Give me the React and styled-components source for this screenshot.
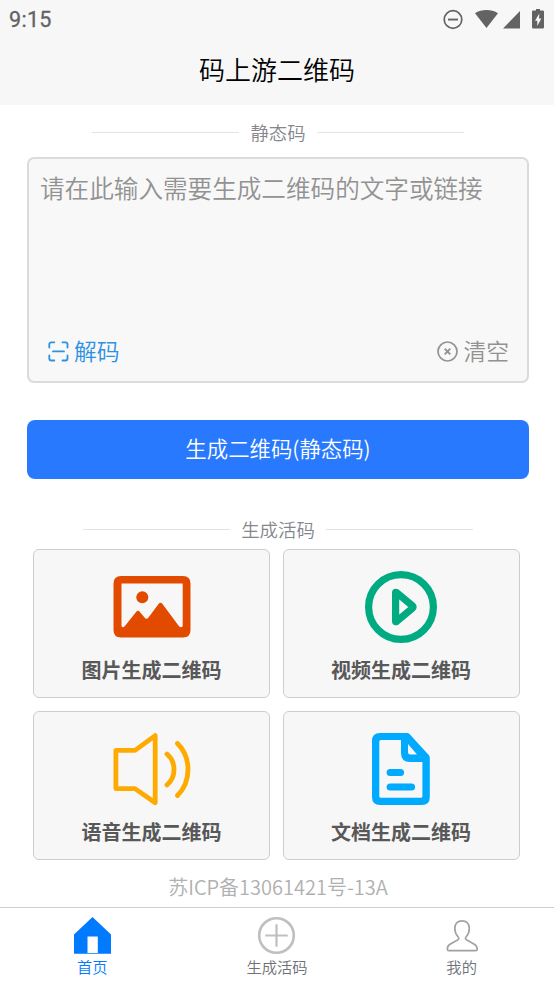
import React from 'react';
import styled, { createGlobalStyle } from 'styled-components';

const GlobalStyle = createGlobalStyle`
  * {
    box-sizing: border-box;
  }

  body {
    margin: 0;
    background-color: #fff;
    font-family: 'Noto Sans CJK SC', sans-serif;
    font-weight: 350;
  }

  svg {
    display: block;
    flex-shrink: 0;
  }
`;

const Page = styled.div`
  display: flex;
  flex-direction: column;
  width: 554px;
  height: 985px;
  background-color: #fff;
  overflow: hidden;
`;

const Header = styled.header`
  height: 105px;
  background-color: #f7f7f7;
`;

const StatusBar = styled.div`
  display: flex;
  align-items: center;
  justify-content: space-between;
  height: 37px;
  padding: 0 8px 0 9px;
  color: #636363;
`;

const Clock = styled.span`
  padding-top: 2px;
  font-family: Roboto, sans-serif;
  font-size: 21.5px;
  font-weight: 400;
  letter-spacing: 0.3px;
  line-height: 36px;
  -webkit-text-stroke: 0.3px #636363;
`;

const Title = styled.h1`
  margin: 0;
  text-align: center;
  font-size: 26px;
  font-weight: 350;
  line-height: 64px;
  color: #000;
`;

const Content = styled.main`
  display: flex;
  flex-direction: column;
  height: 802px;
  padding: 14px 25px 0 27px;
`;

const Divider = styled.div`
  display: flex;
  align-items: center;
  justify-content: center;
  gap: 11px;
  height: 26px;
  font-size: 18.4px;
  line-height: 26px;
  color: #85878c;

  &::before,
  &::after {
    content: '';
    width: 147.5px;
    height: 1px;
    background-color: #e2e3e5;
  }
`;

const InputBox = styled.section`
  display: flex;
  flex-direction: column;
  justify-content: space-between;
  height: 226px;
  margin-top: 12px;
  padding: 11px 18px 13px 11px;
  border: 2px solid #dbdbdb;
  border-radius: 7px;
  background-color: #f8f8f8;
`;

const Placeholder = styled.div`
  font-size: 24.6px;
  line-height: 34px;
  white-space: nowrap;
  color: #929292;
`;

const BoxActions = styled.div`
  display: flex;
  justify-content: space-between;
  padding-left: 8px;
`;

const Action = styled.div`
  display: flex;
  align-items: center;
  gap: 5px;
  font-size: 22.8px;
  line-height: 34px;
  color: ${props => props.color};
`;

const SubmitButton = styled.button`
  height: 59px;
  margin: 37px 0 0;
  padding: 0 0 5px;
  border: 0;
  border-radius: 8px;
  background-color: #2979ff;
  color: #fff;
  font-family: inherit;
  font-size: 21.4px;
  font-weight: 350;
`;

const LiveSection = styled.section`
  margin-top: 37px;
`;

const CardGrid = styled.div`
  display: grid;
  grid-template-columns: 237px 237px;
  grid-auto-rows: 149px;
  gap: 13px 12.5px;
  margin: 7px 0 0 6px;
`;

const Card = styled.div`
  display: flex;
  flex-direction: column;
  align-items: center;
  padding-top: 16px;
  border: 1.5px solid #cdcdcd;
  border-radius: 6px;
  background-color: #f7f7f7;
`;

const CardLabel = styled.div`
  margin-top: 7px;
  font-size: 20px;
  font-weight: 700;
  line-height: 30px;
  color: #585858;
`;

const Record = styled.footer`
  margin-top: 13px;
  text-align: center;
  font-size: 20px;
  line-height: 28px;
  color: #b0b0b0;
`;

const TabBar = styled.nav`
  display: grid;
  grid-template-columns: repeat(3, 1fr);
  height: 78px;
  border-top: 1px solid #cfcfcf;
  background-color: #fff;
`;

const Tab = styled.div`
  display: flex;
  flex-direction: column;
  align-items: center;
  padding-top: 8px;
  font-size: 15.3px;
  line-height: 22px;
  color: ${props => (props.$active ? '#007aff' : '#6f7277')};
`;

const StatusIcons = () => (
  <svg width="104" height="24" viewBox="442 6 104 24" fill="#636363">
    <circle cx="453" cy="18.5" r="8.8" fill="none" stroke="#636363" strokeWidth="1.7" />
    <path d="M448 17.6h10v1.9h-10z" />
    <path d="M475 12.3C481.5 8 491.5 8 498 12.3L486.5 27z" />
    <path d="M503 27.5L520 10V27.5z" />
    <path
      fillRule="evenodd"
      d="M536 8h4v1.500h2.800q1.200 0 1.200 1.200v15.600q0 1.200-1.200 1.200h-9.600q-1.200 0-1.200-1.200V10.700q0-1.200 1.200-1.200H536zM539.300 12.500L535 19.800H537.300V25L541.300 17.500H539z"
    />
  </svg>
);

const ScanIcon = () => (
  <svg width="21" height="21" viewBox="0 0 21 21" fill="none" stroke="#2b91e2" strokeWidth="1.800" strokeLinecap="round">
    <path d="M1.300 6.500V3.300q0-2 2-2h3M14.500 1.300h3q2 0 2 2v3.200M19.500 14.300v3.200q0 2-2 2h-3M6.300 19.500h-3q-2 0-2-2v-3.200M5 10.400h11" />
  </svg>
);

const ClearIcon = () => (
  <svg width="21" height="21" viewBox="0 0 21 21" fill="none" stroke="#929292">
    <circle cx="10.500" cy="10.500" r="9.500" strokeWidth="1.700" />
    <path d="M7.700 7.700l5.600 5.600M13.300 7.700l-5.600 5.600" strokeWidth="1.900" />
  </svg>
);

const ImageIcon = () => (
  <svg width="82" height="82" viewBox="0 0 82 82" fill="#e24a00">
    <path
      fillRule="evenodd"
      d="M10 10H72Q79.500 10 79.500 17.500V64Q79.500 71.500 72 71.500H10Q2.500 71.500 2.500 64V17.500Q2.500 10 10 10zM10.500 17.500V60Q11.500 62.500 13.700 60.300L25.300 45.800Q27 43.700 28.700 45.800L33.500 51.500Q35.500 54 37.500 51.500L47.500 38Q49.500 35.500 51.500 38L68 60.300Q70.500 62.500 71.700 60V17.500z"
    />
    <circle cx="31.300" cy="31.200" r="6" />
  </svg>
);

const VideoIcon = () => (
  <svg width="82" height="82" viewBox="0 0 82 82" fill="none" stroke="#00ab82" strokeWidth="7.200">
    <circle cx="41" cy="41" r="32.400" />
    <path d="M35.600 26.600V55.200Q35.600 56 36.500 55.400L52.400 42.200Q53.800 41 52.400 39.800L36.500 26.600Q35.600 26 35.600 26.600z" strokeLinejoin="round" />
  </svg>
);

const VoiceIcon = () => (
  <svg width="82" height="82" viewBox="0 0 82 82" fill="none" stroke="#ffaa00" strokeWidth="4.800" strokeLinecap="round" strokeLinejoin="round">
    <path d="M4.900 22.400H24L44.200 7.600V74.800L24 60.600H4.900z" />
    <path d="M56 26Q63 32 63 41.500T56 57M66.500 15.500Q77 26 77 41.500T66.500 67.500" />
  </svg>
);

const DocIcon = () => (
  <svg width="82" height="82" viewBox="0 0 82 82" fill="none" stroke="#00aaff" strokeWidth="7.200" strokeLinecap="round" strokeLinejoin="round">
    <path
      fill="#00aaff"
      stroke="none"
      fillRule="evenodd"
      d="M20 5H47Q48.500 5 49.500 6L68.700 27Q69.800 28.200 69.800 30V69Q69.800 77 61.800 77H20Q12 77 12 69V13Q12 5 20 5zM21 12Q19.300 12 19.300 13.700V68.200Q19.300 69.800 21 69.800H60.700Q62.400 69.800 62.400 68.200V34H50Q41 34 41 25V12zM48 16V24Q48 26.500 50.500 26.500H57z"
    />
    <path d="M30.200 44.500H40.500M30.200 59H51.500" />
  </svg>
);

const HomeIcon = () => (
  <svg width="39" height="39" viewBox="0 0 39 39" fill="#007aff">
    <path fillRule="evenodd" d="M19.500 1L38 18.500V37.700H1V18.500zM14.500 20.500V37h10.300V20.500z" />
  </svg>
);

const PlusIcon = () => (
  <svg width="39" height="39" viewBox="0 0 39 39" fill="none" stroke="#bfbfbf">
    <circle cx="19.500" cy="19.500" r="17.300" strokeWidth="2.600" />
    <path d="M19.500 8.300V30.700M8.300 19.500H30.700" strokeWidth="2.200" />
  </svg>
);

const PersonIcon = () => (
  <svg width="39" height="39" viewBox="0 0 39 39" fill="none" stroke="#a2a2a2" strokeWidth="1.700" strokeLinejoin="round">
    <path d="M20 4.800C15.500 4.800 12.800 7.800 12.800 12.200C12.800 16 14.300 18.800 16 20.800C17.200 22.200 17 23.200 15.500 24.100L8 28.200C5.800 29.500 5.300 31 5.300 33.200Q5.300 34.700 7 34.700H33.500Q35.200 34.700 35.200 33.200C35.200 31 34.500 29.500 32.300 28.200L24.800 24.100C23.300 23.200 23 22.200 24.200 20.800C26 18.800 27.300 16 27.300 12.200C27.300 7.800 24.500 4.800 20 4.800z" />
  </svg>
);

const cards = [
  { label: '图片生成二维码', Icon: ImageIcon },
  { label: '视频生成二维码', Icon: VideoIcon },
  { label: '语音生成二维码', Icon: VoiceIcon },
  { label: '文档生成二维码', Icon: DocIcon },
];

const tabs = [
  { label: '首页', Icon: HomeIcon, active: true },
  { label: '生成活码', Icon: PlusIcon },
  { label: '我的', Icon: PersonIcon },
];

const App = () => (
  <Page>
    <GlobalStyle />
    <Header>
      <StatusBar>
        <Clock>9:15</Clock>
        <StatusIcons />
      </StatusBar>
      <Title>码上游二维码</Title>
    </Header>

    <Content>
      <Divider>静态码</Divider>
      <InputBox>
        <Placeholder>请在此输入需要生成二维码的文字或链接</Placeholder>
        <BoxActions>
          <Action color="#2b91e2">
            <ScanIcon />
            解码
          </Action>
          <Action color="#929292">
            <ClearIcon />
            清空
          </Action>
        </BoxActions>
      </InputBox>
      <SubmitButton type="button">生成二维码(静态码)</SubmitButton>

      <LiveSection>
        <Divider>生成活码</Divider>
        <CardGrid>
          {cards.map(({ label, Icon }) => (
            <Card key={label}>
              <Icon />
              <CardLabel>{label}</CardLabel>
            </Card>
          ))}
        </CardGrid>
      </LiveSection>
      <Record>苏ICP备13061421号-13A</Record>
    </Content>

    <TabBar>
      {tabs.map(({ label, Icon, active }) => (
        <Tab key={label} $active={active}>
          <Icon />
          {label}
        </Tab>
      ))}
    </TabBar>
  </Page>
);

export default App;
